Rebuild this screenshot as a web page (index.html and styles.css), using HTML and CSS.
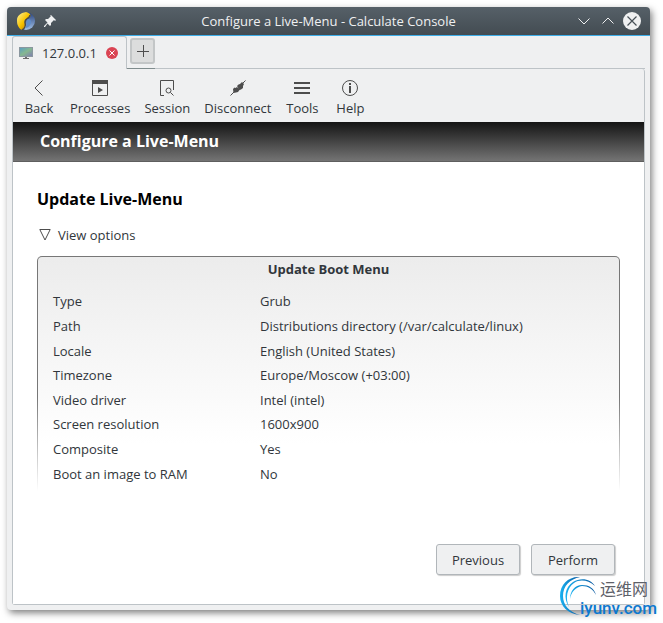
FILE: index.html
```html
<!DOCTYPE html>
<html lang="en">
<head>
  <meta charset="UTF-8">
  <title>Configure a Live-Menu - Calculate Console</title>
  <link rel="stylesheet" href="styles.css">
</head>
<body>

  <div class="window">
    <header class="titlebar">
      <div class="title-icons">
        <svg width="20" height="20" viewBox="0 0 20 20">
          <defs>
            <linearGradient id="gold" x1="0" y1="0" x2="1" y2="1">
              <stop offset="0" stop-color="#fff3a0"/>
              <stop offset="0.5" stop-color="#f7c400"/>
              <stop offset="1" stop-color="#b06a00"/>
            </linearGradient>
            <linearGradient id="blue" x1="0" y1="0" x2="0" y2="1">
              <stop offset="0" stop-color="#263f78"/>
              <stop offset="1" stop-color="#9fbfe6"/>
            </linearGradient>
          </defs>
          <circle cx="10" cy="10" r="9" fill="url(#blue)"/>
          <path d="M10 1C4 2 1 5 1 9c0 4 1 8 5 10 3-1 4-4 3-7-1-3 0-4 3-5 4-1 3-5-2-6z" fill="url(#gold)"/>
          <path d="M14 4c0 4-5 3-5 7 1 4-1 7-3 8" fill="none" stroke="#4b4a45" stroke-width="1.500"/>
          <path d="M12 8c3 0 4 3 2 6-1 2-3 3-5 3 3-3 0-7 3-9z" fill="#5f8dca"/>
        </svg>
        <svg width="12" height="12" viewBox="0 0 12 12">
          <path d="M7 0l5 5-1 1-1-1-3 3v2l-1 1-2.500-2.500L1 12H0v-1l3.500-3.500L1 5l1-1h2l3-3-1-1z" fill="#eff0f1"/>
        </svg>
      </div>
      <h1>Configure a Live-Menu - Calculate Console</h1>
      <div class="title-buttons">
        <button aria-label="Minimize">
          <svg width="18" height="18" viewBox="0 0 18 18"><path d="M3.500 6.500L9 12l5.500-5.500" fill="none" stroke="#eff0f1"/></svg>
        </button>
        <button aria-label="Maximize">
          <svg width="18" height="18" viewBox="0 0 18 18"><path d="M3.500 11.500L9 6l5.500 5.500" fill="none" stroke="#eff0f1"/></svg>
        </button>
        <button aria-label="Close">
          <svg width="18" height="18" viewBox="0 0 18 18"><circle cx="9" cy="9" r="9" fill="#eff0f1"/><path d="M4.500 4.500l9 9M13.500 4.500l-9 9" stroke="#475057" stroke-width="1.200"/></svg>
        </button>
      </div>
    </header>

    <div class="tabs">
      <div class="tab">
        <svg width="14" height="12" viewBox="0 0 14 12">
          <defs>
            <linearGradient id="screen" x1="0" y1="0" x2="1" y2="1">
              <stop offset="0" stop-color="#5b9fc0"/>
              <stop offset="0.500" stop-color="#86b890"/>
              <stop offset="1" stop-color="#8080b0"/>
            </linearGradient>
          </defs>
          <rect width="14" height="10" fill="#8a979f"/>
          <rect x="1" y="1" width="12" height="8" fill="url(#screen)"/>
          <path d="M6 10h2v1h2v1H4v-1h2z" fill="#6d6d6d"/>
        </svg>
        <span>127.0.0.1</span>
        <button class="close-tab" aria-label="Close tab">
          <svg width="12" height="12" viewBox="0 0 12 12"><circle cx="6" cy="6" r="6" fill="#da4453"/><path d="M3.500 3.500l5 5M8.500 3.500l-5 5" stroke="#fff"/></svg>
        </button>
      </div>
      <div class="tab-add">
        <button aria-label="New tab">
          <svg width="12" height="12" viewBox="0 0 12 12"><path d="M6.500 0v12M0 6.500h12" stroke="#4d4d4d"/></svg>
        </button>
      </div>
      <div class="tab-line"></div>
    </div>

    <div class="frame">
      <nav class="toolbar">
        <button>
          <svg width="16" height="16" viewBox="0 0 16 16"><path d="M11.500 0.500L4 8l7.500 7.500" fill="none" stroke="#4d4d4d"/></svg>
          Back
        </button>
        <button>
          <svg width="16" height="16" viewBox="0 0 16 16"><path d="M0.500 1v14.500h15V1" fill="none" stroke="#4d4d4d"/><path d="M0 0h16v4H0zM6 7l5 3-5 3z" fill="#4d4d4d"/></svg>
          Processes
        </button>
        <button>
          <svg width="16" height="16" viewBox="0 0 16 16"><path d="M5 15.500H1.500V0.500h13V10M11.500 12.500l3 3" fill="none" stroke="#4d4d4d"/><circle cx="9.500" cy="10.500" r="2.500" fill="none" stroke="#4d4d4d"/></svg>
          Session
        </button>
        <button>
          <svg width="16" height="16" viewBox="0 0 16 16"><path d="M0.500 15.500l4-4M11.500 4.500l4-4" stroke="#4d4d4d"/><path d="M3 9l1.500-1.500 1 .5 1.500-1 2 2 2-1-3 4-2 .5L3.500 13zM7 6l1.500-1.500L10 4l2-2 2 2-1 2v2l-2 1.500L9.500 10z" fill="#4d4d4d"/></svg>
          Disconnect
        </button>
        <button>
          <svg width="16" height="16" viewBox="0 0 16 16"><path d="M0 2h16v2H0zM0 7h16v2H0zM0 12h16v2H0z" fill="#4d4d4d"/></svg>
          Tools
        </button>
        <button>
          <svg width="16" height="16" viewBox="0 0 16 16"><circle cx="8" cy="8" r="7.500" fill="none" stroke="#4d4d4d"/><path d="M7 3h2v2H7zM7 6h2v7H7z" fill="#4d4d4d"/></svg>
          Help
        </button>
      </nav>

      <h2 class="banner">Configure a Live-Menu</h2>

      <main class="content">
        <h3>Update Live-Menu</h3>
        <button class="view-options">
          <svg width="12" height="12" viewBox="0 0 12 12"><path d="M0.800 0.500h10.400L6 11z" fill="none" stroke="#4d4d4d"/></svg>
          View options
        </button>

        <section class="panel">
          <table>
            <caption>Update Boot Menu</caption>
            <tbody>
              <tr><th scope="row">Type</th><td>Grub</td></tr>
              <tr><th scope="row">Path</th><td>Distributions directory (/var/calculate/linux)</td></tr>
              <tr><th scope="row">Locale</th><td>English (United States)</td></tr>
              <tr><th scope="row">Timezone</th><td>Europe/Moscow (+03:00)</td></tr>
              <tr><th scope="row">Video driver</th><td>Intel (intel)</td></tr>
              <tr><th scope="row">Screen resolution</th><td>1600x900</td></tr>
              <tr><th scope="row">Composite</th><td>Yes</td></tr>
              <tr><th scope="row">Boot an image to RAM</th><td>No</td></tr>
            </tbody>
          </table>
        </section>

        <div class="actions">
          <button>Previous</button>
          <button>Perform</button>
        </div>
      </main>
    </div>
  </div>

  <div class="watermark">
    <svg width="40" height="40" viewBox="0 0 40 40">
      <defs>
        <linearGradient id="swirl" x1="0" y1="0" x2="1" y2="0">
          <stop offset="0" stop-color="#19b2f2"/>
          <stop offset="1" stop-color="#07549d"/>
        </linearGradient>
      </defs>
      <path d="M20 39C8 38 0 30 0 20 0 8 9 0 20 1 10 3 3 10 3 20c0 9 6 16 17 19z" fill="url(#swirl)"/>
      <path d="M9 31C3 22 5 11 13 6c8-5 18-3 22 4C28 4 20 3 14 7 7 12 5 22 9 31z" fill="url(#swirl)"/>
      <path d="M10 23c0-8 5-14 12-14 7 0 12 3 14 10-3-6-8-9-14-9-6 1-11 6-12 13z" fill="url(#swirl)"/>
    </svg>
    <span class="mark-name">运维网</span>
    <span class="mark-site">iyunv.com</span>
  </div>

</body>
</html>
```
FILE: styles.css
```css
* {
  box-sizing: border-box;
}

body {
  margin: 0;
  padding: 7px 13px 13px 7px;
  min-height: 100vh;
  display: flex;
  position: relative;
  background: #fff;
  color: #31363b;
  font-family: "Open Sans", "Noto Sans", sans-serif;
  font-size: 13px;
  line-height: 18px;
}

button {
  padding: 0;
  border: none;
  background: none;
  color: inherit;
  font: inherit;
  cursor: pointer;
}

svg {
  display: block;
  flex: none;
}

.window {
  flex: 1;
  display: flex;
  flex-direction: column;
  background: #eff0f1;
  border-radius: 4px;
  box-shadow: 2px 3px 7px rgba(0, 0, 0, 0.5);
}

/* title bar */
.titlebar {
  display: grid;
  grid-template-columns: 1fr auto 1fr;
  align-items: center;
  height: 29px;
  padding: 0 9px;
  border-bottom: 1px solid #3daee9;
  border-radius: 4px 4px 0 0;
  background: linear-gradient(#566068, #434c52);
}

.titlebar h1 {
  margin: 0;
  color: #eff0f1;
  font-size: 13px;
  font-weight: 400;
}

.title-icons,
.title-buttons {
  display: flex;
  align-items: center;
  gap: 8px;
}

.title-buttons {
  justify-content: flex-end;
  gap: 6px;
}

/* tabs */
.tabs {
  display: flex;
  height: 33px;
  padding: 0 5px;
}

.tab {
  display: flex;
  align-items: center;
  gap: 9px;
  width: 115px;
  padding: 0 6px;
  border: 1px solid #bdc3c7;
  border-bottom: none;
  border-radius: 3px 3px 0 0;
}

.close-tab {
  margin-left: auto;
  margin-right: 5px;
}

.tab-add {
  width: 28px;
  padding: 2px 0 0 3px;
  border-bottom: 1px solid #7f8c8d;
}

.tab-add button {
  display: grid;
  place-items: center;
  width: 25px;
  height: 26px;
  border: 2px solid #c3c6c7;
  border-radius: 3px;
  background: #dcdddd;
}

.tab-line {
  flex: 1;
  border-bottom: 1px solid #bdc3c7;
}

/* framed page */
.frame {
  flex: 1;
  display: flex;
  flex-direction: column;
  margin: 0 5px 5px;
  border: 1px solid #bdc3c7;
  border-top: none;
  border-radius: 0 3px 3px 3px;
}

.toolbar {
  display: flex;
  height: 53px;
  padding: 11px 2px 0;
}

.toolbar button {
  display: flex;
  flex-direction: column;
  align-items: center;
  gap: 3px;
  min-width: 48px;
  padding: 0 7px;
}

.banner {
  margin: 0;
  padding: 9px 27px;
  border-bottom: 1px solid #5f5f5f;
  background: linear-gradient(#141414, #747474);
  color: #fff;
  font-size: 16px;
  line-height: 21px;
}

.content {
  flex: 1;
  display: flex;
  flex-direction: column;
  padding: 26px 24px 29px;
  background: #fff;
}

.content h3 {
  margin: 0 0 16px;
  color: #000;
  font-size: 16px;
  line-height: 22px;
}

.view-options {
  display: flex;
  align-items: center;
  align-self: flex-start;
  gap: 7px;
  margin-bottom: 12px;
  padding-left: 2px;
}

/* the side borders fade out towards the bottom */
.panel {
  padding: 3px 15px 5px;
  border: 1px solid transparent;
  border-bottom: none;
  border-radius: 5px 5px 0 0;
  background:
    linear-gradient(#ececec, #fff 80%) padding-box,
    linear-gradient(#777 60%, #fff) border-box;
}

.panel table {
  width: 100%;
  height: 197px;
  border-collapse: collapse;
}

.panel caption {
  padding-bottom: 11px;
  font-weight: 700;
}

.panel th,
.panel td {
  padding: 0;
  font-weight: 400;
  text-align: left;
}

.panel th {
  width: 207px;
}

.actions {
  display: flex;
  justify-content: flex-end;
  gap: 11px;
  margin-top: auto;
  padding-right: 5px;
}

.actions button {
  width: 84px;
  height: 31px;
  border: 1px solid #b1b6ba;
  border-radius: 3px;
  background: #eff0f1;
  box-shadow: 1px 1px 1px rgba(0, 0, 0, 0.2);
}

/* site mark over the corner of the window */
.watermark {
  position: absolute;
  right: 5px;
  bottom: 7px;
  width: 98px;
  height: 40px;
}

.watermark span {
  position: absolute;
  line-height: 16px;
}

.mark-name {
  top: 4px;
  right: 10px;
  color: #5d6068;
  font-family: "Noto Sans CJK SC", sans-serif;
  font-size: 16px;
}

.mark-site {
  right: 1px;
  bottom: 0;
  color: #0c78cf;
  font-family: Roboto, sans-serif;
  font-size: 17px;
  font-weight: 500;
}
```
